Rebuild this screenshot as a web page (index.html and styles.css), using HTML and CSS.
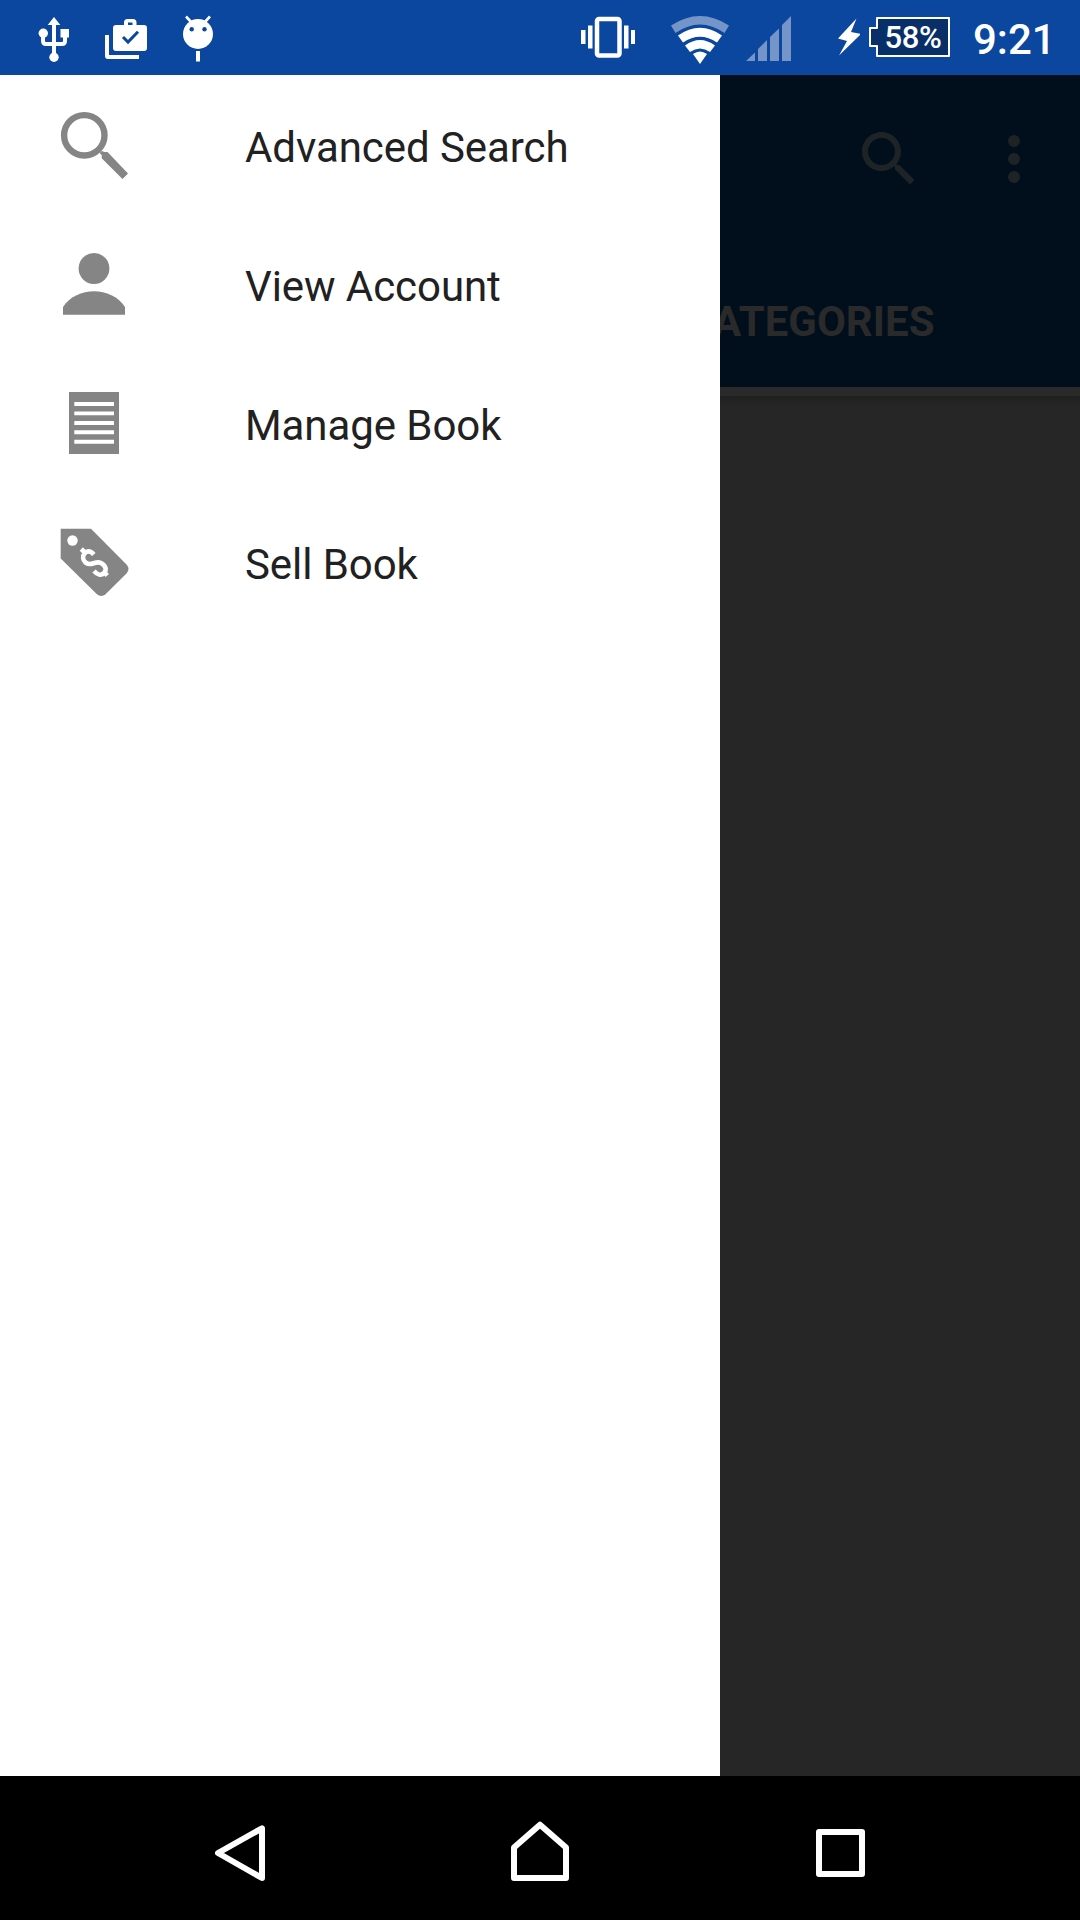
FILE: index.html
```html
<!DOCTYPE html>
<html lang="en">
<head>
<meta charset="utf-8">
<title>Books</title>
<link rel="stylesheet" href="styles.css">
</head>
<body>
<div class="phone">
  <header class="status">
    <svg class="status-left" width="240" height="75" viewBox="0 0 240 75">
      <g fill="none" stroke="#fff" stroke-width="4">
        <path d="M54 22V56M43 35V41Q43 44 46 44H62Q65 44 65 41V35"/>
      </g>
      <g fill="#fff">
        <path d="M54 17L60.300 25H47.700Z"/><circle cx="43.300" cy="33.300" r="4.700"/><rect x="60.500" y="29" width="8.500" height="8.500"/><circle cx="54" cy="57.300" r="4.700"/>
        <path d="M105 35H109V55H139V59H108Q105 59 105 56Z"/>
        <path fill-rule="evenodd" d="M124 25V22.500Q124 19 127.500 19H133Q136.500 19 136.500 22.500V25H144Q147 25 147 28V48Q147 51 144 51H116Q113 51 113 48V28Q113 25 116 25ZM128 25H132.500V22.500H128Z"/>
        <circle cx="198" cy="34" r="15"/><rect x="196" y="51" width="4" height="10.500"/>
      </g>
      <path d="M123 37L128 42L138 31.700" fill="none" stroke="#0b479e" stroke-width="3"/>
      <path d="M186 16.500L192 23M210 16.500L204 23" stroke="#fff" stroke-width="2.600"/>
      <circle cx="191.700" cy="29.300" r="2.200" fill="#0b479e"/><circle cx="204.500" cy="29.300" r="2.200" fill="#0b479e"/>
    </svg>
    <svg class="status-right" width="300" height="75" viewBox="560 0 300 75">
      <rect x="597" y="19" width="22.500" height="36.500" rx="2" fill="none" stroke="#fff" stroke-width="4.500"/>
      <path fill="#fff" d="M581 30H585.500V44H581ZM588 25.500H592.500V48.500H588ZM624 25.500H628.500V48.500H624ZM631 30H635V44H631Z"/>
      <path fill="#7595c9" d="M671 25.500Q700 6.500 729 25.500L724.500 33Q700 16 675.500 33Z"/>
      <g fill="#fff">
        <path d="M678 35.500Q700 20 722 35.500L717 42.500Q700 31 683 42.500Z"/>
        <path d="M685 45.500Q700 34.500 715 45.500L710 52Q700 45 690 52Z"/>
        <path d="M693 54Q700 49 707 54L700 64Z"/>
        <path d="M856.500 18.500L838 38.500L847 41L839 55.500L861 34L851 32Z"/>
      </g>
      <path fill="#7595c9" d="M746 61L755 52.500V61ZM758 49L767 40V61H758ZM770 37L779 28.500V61H770ZM782 25L791 16V61H782Z"/>
    </svg>
    <div class="battery">
      <svg width="82" height="42" viewBox="0 0 82 42"><path d="M9 2H81V40H9V30H2V12H9Z" fill="#092f69" stroke="#fff" stroke-width="2" stroke-linejoin="round"/></svg>
      <span class="percent">58%</span>
    </div>
    <time class="clock">9:21</time>
  </header>

  <main class="screen">
    <nav class="drawer">
      <a class="item">
        <svg class="icon" viewBox="44 78 100 139"><circle cx="84.300" cy="135.300" r="20.200" fill="none" stroke="#858585" stroke-width="6.400"/><path fill="#858585" d="M99.500 153L102 151L104.500 152H107.500L128 173.500L122.500 179L101.700 158.300V155Z"/></svg>
        <span>Advanced Search</span>
      </a>
      <a class="item">
        <svg class="icon" viewBox="44 217 100 139"><g fill="#858585"><circle cx="94" cy="268.500" r="15.400"/><path d="M63 314.700V307C70 296.500 82 291.300 94 291.300S118 296.500 125 307V314.700Z"/></g></svg>
        <span>View Account</span>
      </a>
      <a class="item">
        <svg class="icon" viewBox="44 356 100 139"><path fill="#858585" d="M69 392H119V454H69Z"/><path fill="#fff" d="M74.300 402H114V406H74.300ZM74.300 411.500H114V415.300H74.300ZM74.300 421H114V425H74.300ZM74.300 430.300H114V434.300H74.300ZM74.300 439.700H114V443.700H74.300Z"/></svg>
        <span>Manage Book</span>
      </a>
      <a class="item">
        <svg class="icon" viewBox="44 495 100 139"><path fill="#858585" d="M60.700 528.700H91L126.500 564.500Q130.500 569 126.500 573.500L105.500 594.300Q101 598 96.700 594L60.700 558.500Z"/><circle cx="72.500" cy="540.500" r="5.200" fill="#fff"/><path d="M81.300 549L85.500 553.200M93.800 554.500C90 550 86.500 551 84.500 553.500C82 556.500 83 560 85.500 562.500C90 567 95.500 560.500 100.500 562.800C106 565.500 107 570 104 573C101 576 97.500 575 94 571M103.500 571.500L107.300 575.500" fill="none" stroke="#fff" stroke-width="4.600"/></svg>
        <span>Sell Book</span>
      </a>
    </nav>
    <section class="page">
      <div class="toolbar">
        <svg width="72" height="72" viewBox="0 0 24 24" fill="#1e2325"><path d="M15.500 14h-.79l-.28-.27C15.410 12.590 16 11.110 16 9.500 16 5.910 13.090 3 9.500 3S3 5.910 3 9.500 5.910 16 9.500 16c1.610 0 3.090-.59 4.230-1.570l.27.280v.79l5 4.990L20.490 19l-4.990-5zm-6 0C7.010 14 5 11.990 5 9.500S7.010 5 9.500 5 14 7.010 14 9.500 11.990 14 9.500 14z"/></svg>
        <svg width="72" height="72" viewBox="0 0 24 24" fill="#1e2325"><circle cx="12" cy="6" r="2"/><circle cx="12" cy="12" r="2"/><circle cx="12" cy="18" r="2"/></svg>
      </div>
      <div class="tabs"><span class="tab">CATEGORIES</span></div>
      <div class="indicator"></div>
      <div class="content"></div>
    </section>
  </main>

  <footer class="navbar">
    <svg width="1080" height="144" viewBox="0 0 1080 144" fill="none" stroke="#fff" stroke-width="6" stroke-linejoin="round">
      <path d="M262 52.300V102L218 77Z"/>
      <path d="M514 71.500L540 48.700L566 71.500V102H514Z"/>
      <rect x="819" y="56" width="43" height="42"/>
    </svg>
  </footer>
</div>
</body>
</html>
```
FILE: styles.css
```css
* { box-sizing: border-box; }
body { margin: 0; font-family: Roboto, sans-serif; }
svg { display: block; flex: none; }
.phone { width: 1080px; height: 1920px; display: flex; flex-direction: column; overflow: hidden; }

.status { height: 75px; flex: none; display: flex; background: #0b479e; color: #fff; }
.status-right { margin-left: 320px; }
.battery { position: relative; width: 82px; height: 42px; margin: 16px 0 0 8px; flex: none; }
.percent { position: absolute; inset: 1px 1px 0 9px; display: flex; align-items: center; justify-content: center; font-size: 31px; font-weight: 500; line-height: 42px; letter-spacing: -0.3px; }
.clock { margin-left: 23px; font-size: 42px; font-weight: 500; line-height: 79px; }

.screen { flex: 1; display: flex; min-height: 0; }
.drawer { width: 720px; flex: none; padding-top: 3px; background: #fff; position: relative; z-index: 1; }
.item { display: flex; align-items: center; height: 139px; padding-left: 44px; gap: 101px; font-size: 42px; letter-spacing: -0.07px; color: #212121; white-space: nowrap; }
.icon { width: 100px; height: 139px; }

.page { flex: 1; display: flex; flex-direction: column; background: #262626; }
.toolbar { height: 168px; padding: 48px 30px 0 0; display: flex; justify-content: flex-end; gap: 53px; background: #000f1b; }
.tabs { height: 144px; display: flex; justify-content: center; align-items: center; width: 540px; margin-left: -180px; padding-top: 12px; background: #000f1b; }
.tab { font-size: 42px; font-weight: 700; color: #2a2a2a; }
.indicator { height: 9px; background: #2a2a2a; }
.content { flex: 1; background: linear-gradient(#202020, #262626 12px); }

.navbar { height: 144px; flex: none; background: #000; }
```
